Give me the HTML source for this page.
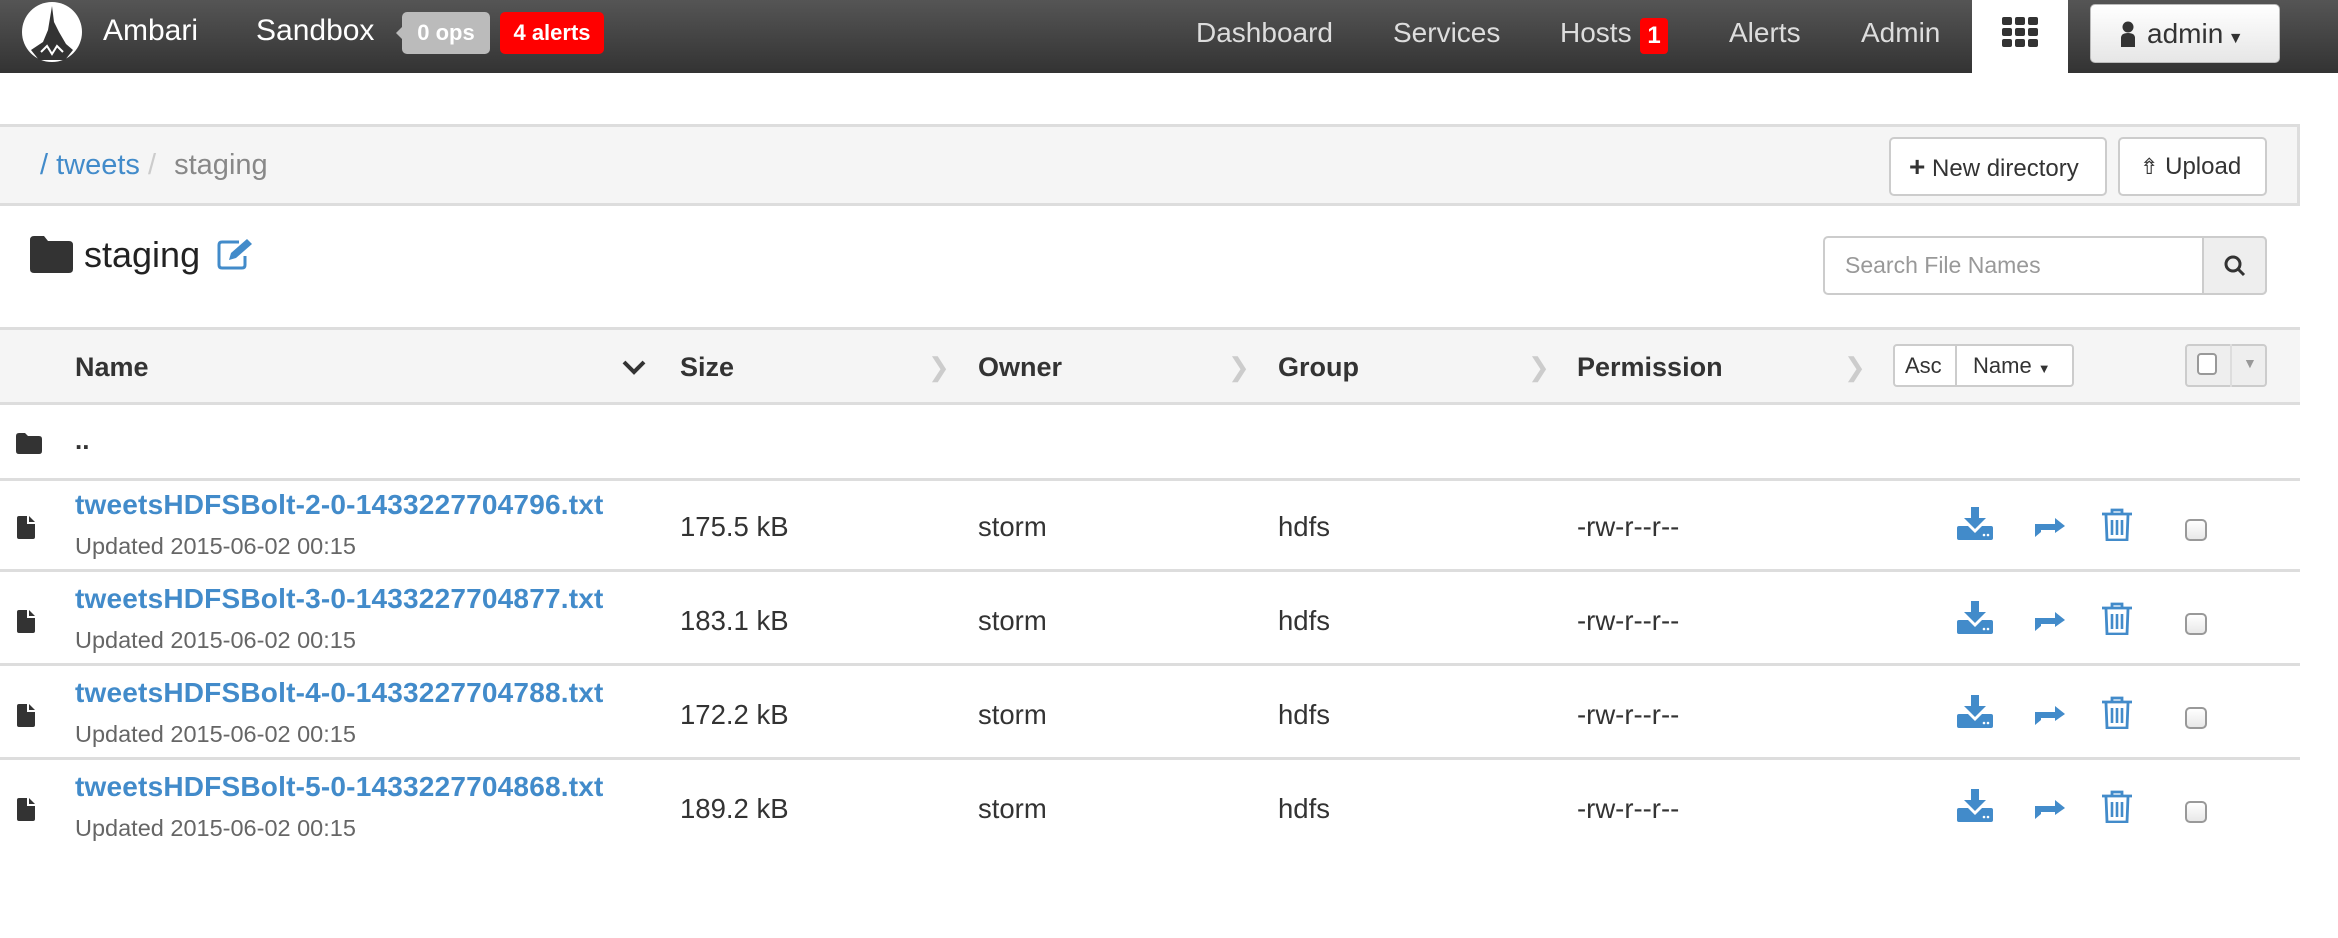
<!DOCTYPE html>
<html><head><meta charset="utf-8">
<style>
*{margin:0;padding:0;box-sizing:border-box}
body{width:2338px;height:938px;background:#fff;font-family:"Liberation Sans",Arial,sans-serif;position:relative;overflow:hidden;color:#333}
.a{position:absolute}
.nav{left:0;top:0;width:2338px;height:73px;background:linear-gradient(#555,#333)}
.nt{color:#ddd;font-size:28px;top:17px}
.hd{font-size:27px;font-weight:bold;top:352px;color:#333}
.chev{top:352px;color:#ccc;font-size:26px}
.row{left:0;width:2300px;height:94px;border-bottom:3px solid #ddd}
.fn{left:75px;font-size:28px;font-weight:bold;color:#428bca;letter-spacing:0.2px}
.up{left:75px;font-size:23.5px;color:#666}
.c{font-size:27.5px;color:#333}
.btn{background:#fff;border:2px solid #ccc;border-radius:5px;font-size:24px;color:#333}
</style></head><body>
<div class="a nav"></div>
<svg class="a" style="left:21px;top:2px" width="62" height="60" viewBox="0 0 62 60"><ellipse cx="31" cy="30" rx="30" ry="30" fill="#fff"/><path d="M31 4 L33 20 L38 30 L45 42 L52 48 L44 58 L18 58 L10 48 L22 40 L27 28 Z" fill="#333"/><path d="M20 50 l6-6 l5 8 l5-8 l6 6" stroke="#fff" stroke-width="2" fill="none"/></svg>
<div class="a" style="left:103px;top:14px;color:#fff;font-size:30px">Ambari</div>
<div class="a" style="left:256px;top:14px;color:#fff;font-size:30px">Sandbox</div>
<div class="a" style="left:402px;top:12px;width:88px;height:42px;background:#bbb;border-radius:5px;color:#fff;font-weight:bold;font-size:22px;line-height:42px;text-align:center">0 ops</div>
<div class="a" style="left:396px;top:25px;width:0;height:0;border:8px solid transparent;border-right-color:#bbb;border-left:0"></div>
<div class="a" style="left:500px;top:12px;width:104px;height:42px;background:#f00;border-radius:5px;color:#fff;font-weight:bold;font-size:22px;line-height:42px;text-align:center">4 alerts</div>
<div class="a nt" style="left:1196px">Dashboard</div>
<div class="a nt" style="left:1393px">Services</div>
<div class="a nt" style="left:1560px">Hosts</div>
<div class="a" style="left:1640px;top:18px;width:28px;height:36px;background:#f00;border-radius:4px;color:#fff;font-weight:bold;font-size:24px;text-align:center;line-height:36px">1</div>
<div class="a nt" style="left:1729px">Alerts</div>
<div class="a nt" style="left:1861px">Admin</div>
<div class="a" style="left:1972px;top:0;width:96px;height:76px;background:#fff"></div>
<svg class="a" style="left:2002px;top:17px" width="36" height="30"><g fill="#333"><rect x="0" y="0" width="10" height="8" rx="2"/><rect x="13" y="0" width="10" height="8" rx="2"/><rect x="26" y="0" width="10" height="8" rx="2"/><rect x="0" y="11" width="10" height="8" rx="2"/><rect x="13" y="11" width="10" height="8" rx="2"/><rect x="26" y="11" width="10" height="8" rx="2"/><rect x="0" y="22" width="10" height="8" rx="2"/><rect x="13" y="22" width="10" height="8" rx="2"/><rect x="26" y="22" width="10" height="8" rx="2"/></g></svg>
<div class="a" style="left:2090px;top:4px;width:190px;height:59px;background:linear-gradient(#fff,#e6e6e6);border:1px solid #bbb;border-radius:5px;font-size:28px;line-height:57px;color:#333;padding-left:56px">admin<span style="font-size:16px"> ▼</span></div>
<svg class="a" style="left:2120px;top:21px" width="16" height="26"><circle cx="8" cy="6" r="5.5" fill="#333"/><path d="M1 26 V17 Q1 12 8 12 Q15 12 15 17 V26Z" fill="#333"/></svg>

<div class="a" style="left:0;top:124px;width:2300px;height:82px;background:#f5f5f5;border:3px solid #ddd;border-left:none"></div>
<div class="a" style="left:40px;top:149px;font-size:29px;color:#428bca">/ tweets <span style="color:#ccc">/</span> <span style="color:#888;margin-left:10px">staging</span></div>
<div class="a btn" style="left:1889px;top:137px;width:218px;height:59px;line-height:55px;padding-left:18px"><b style="font-size:28px">+</b> New directory</div>
<div class="a btn" style="left:2118px;top:137px;width:149px;height:59px;line-height:55px;padding-left:20px"><span style="font-size:22px">⇮</span> Upload</div>

<svg class="a" style="left:30px;top:236px" width="43" height="37"><path d="M0 4 Q0 0 4 0 H14 L18 5 H39 Q43 5 43 9 V33 Q43 37 39 37 H4 Q0 37 0 33Z" fill="#333"/></svg>
<div class="a" style="left:84px;top:234px;font-size:36px;color:#222">staging</div>
<svg class="a" style="left:217px;top:238px" width="38" height="32"><path d="M22 4 H5 Q2 4 2 7 V27 Q2 30 5 30 H25 Q28 30 28 27 V18" stroke="#428bca" stroke-width="3" fill="none"/><path d="M12 22 L14 15 L30 1 L35 6 L19 20 Z" fill="#428bca"/></svg>

<div class="a" style="left:1823px;top:236px;width:444px;height:59px;border:2px solid #ccc;border-radius:5px;background:#fff"></div>
<div class="a" style="left:1845px;top:252px;font-size:23px;color:#999">Search File Names</div>
<div class="a" style="left:2202px;top:236px;width:65px;height:59px;background:#eee;border:2px solid #ccc;border-radius:0 5px 5px 0"></div>
<svg class="a" style="left:2223px;top:254px" width="24" height="24"><circle cx="10" cy="10" r="7" stroke="#333" stroke-width="3" fill="none"/><path d="M15 15 L21 21" stroke="#333" stroke-width="3"/></svg>

<div class="a" style="left:0;top:327px;width:2300px;height:78px;background:#f5f5f5;border-top:3px solid #ddd;border-bottom:3px solid #ddd"></div>
<div class="a hd" style="left:75px">Name</div>
<svg class="a" style="left:622px;top:360px" width="24" height="16"><path d="M2 2 L12 12 L22 2" stroke="#333" stroke-width="4" fill="none"/></svg>
<div class="a hd" style="left:680px">Size</div><div class="a chev" style="left:928px">&#x276F;</div>
<div class="a hd" style="left:978px">Owner</div><div class="a chev" style="left:1228px">&#x276F;</div>
<div class="a hd" style="left:1278px">Group</div><div class="a chev" style="left:1528px">&#x276F;</div>
<div class="a hd" style="left:1577px">Permission</div><div class="a chev" style="left:1844px">&#x276F;</div>
<div class="a" style="left:1893px;top:344px;width:181px;height:43px;border:2px solid #ccc;border-radius:4px;background:#fff;font-size:22px;line-height:39px"><span style="position:absolute;left:10px">Asc</span><span style="position:absolute;left:60px;top:0;height:39px;border-left:2px solid #ccc"></span><span style="position:absolute;left:78px">Name <span style="font-size:13px">▼</span></span></div>
<div class="a" style="left:2185px;top:344px;width:82px;height:43px;border:2px solid #ccc;border-radius:4px;background:#eee"></div>
<div class="a" style="left:2230px;top:344px;height:43px;border-left:2px solid #ddd"></div>
<div class="a" style="left:2197px;top:353px;width:20px;height:22px;border:2px solid #999;border-radius:4px;background:#fff"></div>
<div class="a" style="left:2243px;top:355px;font-size:14px;color:#999">▼</div>

<div class="a row" style="top:405px;height:76px"></div>
<svg class="a" style="left:16px;top:433px" width="26" height="21"><path d="M0 3 Q0 0 3 0 H9 L12 3 H23 Q26 3 26 6 V18 Q26 21 23 21 H3 Q0 21 0 18Z" fill="#333"/></svg>
<div class="a" style="left:75px;top:425px;font-size:26px;font-weight:bold">..</div>

<div id="rows"></div>
<script>
var d=[["2","4796","175.5"],["3","4877","183.1"],["4","4788","172.2"],["5","4868","189.2"]];
var h="";
d.forEach(function(r,i){var t=479+i*94;
h+='<div class="a row" style="top:'+(t-1)+'px;'+(i==3?'border-bottom:none':'')+'"></div>'+
'<svg class="a" style="left:17px;top:'+(t+37)+'px" width="18" height="23"><path d="M0 2 Q0 0 2 0 H10 V8 H18 V21 Q18 23 16 23 H2 Q0 23 0 21Z M12 0 L18 6 H12Z" fill="#333"/></svg>'+
'<div class="a fn" style="top:'+(t+10)+'px">tweetsHDFSBolt-'+r[0]+'-0-143322770'+r[1]+'.txt</div>'+
'<div class="a up" style="top:'+(t+54)+'px">Updated 2015-06-02 00:15</div>'+
'<div class="a c" style="left:680px;top:'+(t+32)+'px">'+r[2]+' kB</div>'+
'<div class="a c" style="left:978px;top:'+(t+32)+'px">storm</div>'+
'<div class="a c" style="left:1278px;top:'+(t+32)+'px">hdfs</div>'+
'<div class="a c" style="left:1577px;top:'+(t+32)+'px">-rw-r--r--</div>'+
'<svg class="a" style="left:1957px;top:'+(t+28)+'px" width="36" height="33"><path d="M14 0 H22 V11 H29 L18 22 L7 11 H14Z" fill="#428bca"/><path d="M0 21 Q0 19 2 19 H11 L18 26 L25 19 H34 Q36 19 36 21 V31 Q36 33 34 33 H2 Q0 33 0 31Z" fill="#428bca"/><circle cx="27" cy="28" r="1.3" fill="#fff"/><circle cx="31" cy="28" r="1.3" fill="#fff"/></svg>'+
'<svg class="a" style="left:2035px;top:'+(t+35)+'px" width="31" height="23"><path d="M0 23 V10 H20 V4 L30 12 L20 19 V16 H6 V18Z" fill="#428bca"/></svg>'+
'<svg class="a" style="left:2102px;top:'+(t+29)+'px" width="30" height="33"><path d="M0 6 H30 M10 6 V2 H20 V6 M4 7 L5 32 H25 L26 7" stroke="#428bca" stroke-width="2.8" fill="none"/><path d="M10 12 V27 M15 12 V27 M20 12 V27" stroke="#428bca" stroke-width="2.6"/></svg>'+
'<div class="a" style="left:2185px;top:'+(t+40)+'px;width:22px;height:22px;border:2px solid #999;border-radius:5px;background:linear-gradient(#fff,#e8e8e8)"></div>';
});
document.getElementById("rows").innerHTML=h;
</script>
</body></html>
